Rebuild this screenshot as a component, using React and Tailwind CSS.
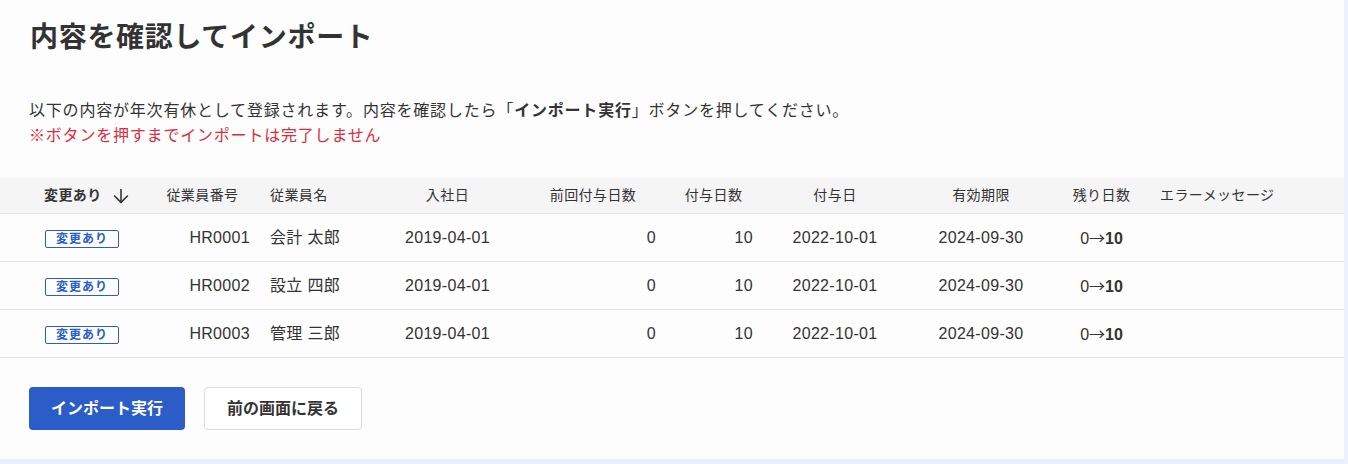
import React from "react";
import { ArrowDown } from "lucide-react";

const rows = [
  { id: "HR0001", name: "会計 太郎", joined: "2019-04-01", prev: 0, grant: 10, grantDate: "2022-10-01", expire: "2024-09-30" },
  { id: "HR0002", name: "設立 四郎", joined: "2019-04-01", prev: 0, grant: 10, grantDate: "2022-10-01", expire: "2024-09-30" },
  { id: "HR0003", name: "管理 三郎", joined: "2019-04-01", prev: 0, grant: 10, grantDate: "2022-10-01", expire: "2024-09-30" },
];

const cols = "grid grid-cols-[145px_113px_116px_147px_144px_97px_146px_146px_95px_1fr]";

function App() {
  return (
    <div
      className="min-h-[464px] bg-[#eaf1fd] pr-[4px] pb-[5px] text-[#333]"
      style={{ fontFamily: '"Liberation Sans", "Noto Sans CJK JP", sans-serif' }}
    >
      <div className="bg-[#fdfdfd] h-[459px]">
        {/* タイトル */}
        <h1 className="px-[30px] pt-[18px] text-[28px] leading-[40px] font-bold tracking-[0.025em]">
          内容を確認してインポート
        </h1>

        {/* 説明 */}
        <div className="px-[29px] mt-[40px] text-[16px] leading-[25px] tracking-[0.05em]">
          <p>
            以下の内容が年次有休として登録されます。内容を確認したら「<span className="font-bold">インポート実行</span>」ボタンを押してください。
          </p>
          <p className="text-[#e02b3c]">※ボタンを押すまでインポートは完了しません</p>
        </div>

        {/* テーブル */}
        <div className="mt-[30px]">
          <div className={`${cols} h-[36px] items-center bg-[#f6f5f6] border-b border-[#e4e4e4] text-[14px] tracking-[0.03em]`}>
            <div className="pl-[44px] flex items-center gap-[8px] font-bold">
              変更あり
              <ArrowDown size={22} strokeWidth={1.7} />
            </div>
            <div className="text-center pl-[2px]">従業員番号</div>
            <div className="pl-[12px]">従業員名</div>
            <div className="text-center">入社日</div>
            <div className="text-center">前回付与日数</div>
            <div className="text-center">付与日数</div>
            <div className="text-center">付与日</div>
            <div className="text-center">有効期限</div>
            <div className="text-center">残り日数</div>
            <div className="pl-[11px]">エラーメッセージ</div>
          </div>

          {rows.map((r) => (
            <div key={r.id} className={`${cols} h-[48px] items-center border-b border-[#e4e4e4] text-[16px] tracking-[0.02em]`}>
              <div className="pl-[45px]">
                <span className="inline-block border border-[#2b5cc8] rounded-[2px] px-[10px] text-[12px] leading-[16px] font-bold tracking-[0.08em] text-[#2b5cc8]">
                  変更あり
                </span>
              </div>
              <div className="text-right pr-[8px]">{r.id}</div>
              <div className="pl-[12px]">{r.name}</div>
              <div className="text-center">{r.joined}</div>
              <div className="text-right pr-[9px]">{r.prev}</div>
              <div className="text-right pr-[9px]">{r.grant}</div>
              <div className="text-center">{r.grantDate}</div>
              <div className="text-center">{r.expire}</div>
              <div className="text-center tracking-normal">
                0<span style={{ fontFamily: '"Noto Sans CJK JP", sans-serif' }}>→</span>
                <span className="font-bold">{r.grant}</span>
              </div>
              <div></div>
            </div>
          ))}
        </div>

        {/* ボタン */}
        <div className="flex gap-[19px] px-[29px] mt-[29px]">
          <button className="h-[43px] w-[156px] rounded-[4px] bg-[#2b5cc8] text-white text-[16px] font-bold">
            インポート実行
          </button>
          <button className="h-[43px] w-[158px] rounded-[4px] border border-[#dcdcdc] bg-white text-[#333] text-[16px] font-bold">
            前の画面に戻る
          </button>
        </div>
      </div>
    </div>
  );
}

export default App;
